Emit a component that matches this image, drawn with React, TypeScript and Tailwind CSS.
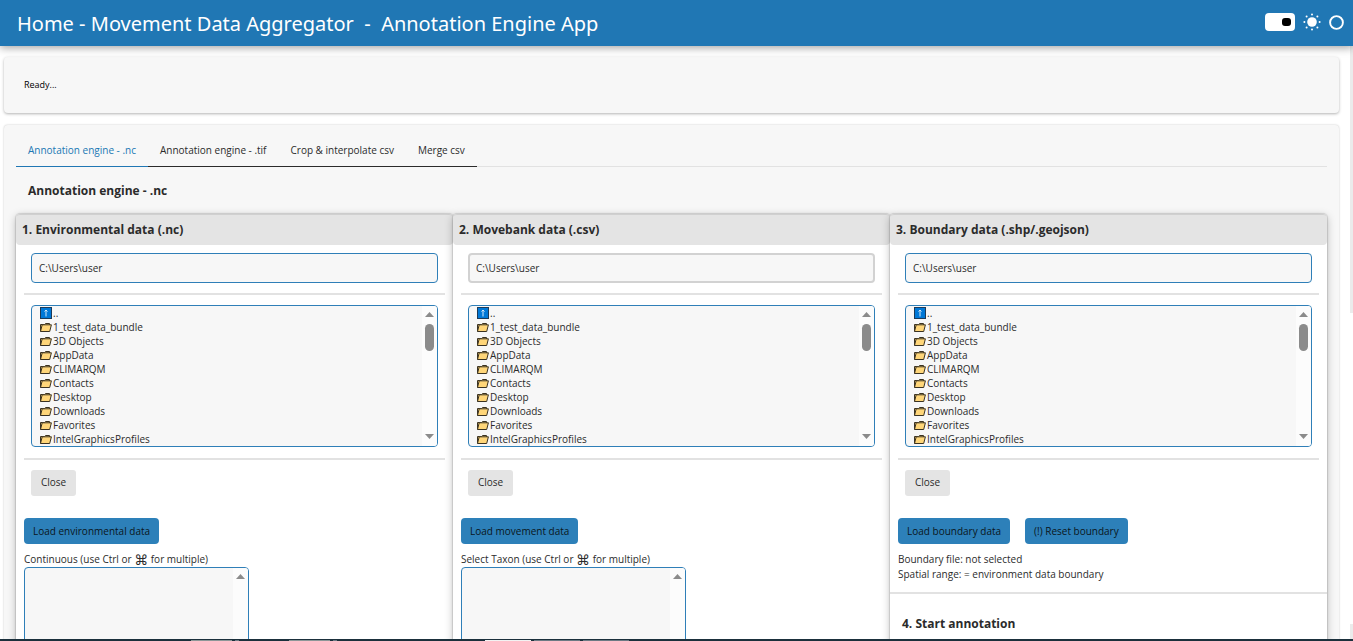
import { useState } from "react";

const folders = [
  "1_test_data_bundle",
  "3D Objects",
  "AppData",
  "CLIMARQM",
  "Contacts",
  "Desktop",
  "Downloads",
  "Favorites",
  "IntelGraphicsProfiles",
];

const tabs = [
  "Annotation engine - .nc",
  "Annotation engine - .tif",
  "Crop & interpolate csv",
  "Merge csv",
];

const FolderIcon = () => (
  <svg width="12" height="9" viewBox="0 0 12 9" className="shrink-0" aria-hidden="true">
    <path d="M0.5 8.5V1.5H4.5L5.5 0.5H9.5V2" fill="#ffd679" stroke="#3a3222" />
    <path d="M0.5 8.5L2.2 1.8H11.4L9.7 8.5Z" fill="#ffd679" stroke="#3a3222" strokeLinejoin="round" />
  </svg>
);

const UpIcon = () => (
  <svg width="12" height="12" viewBox="0 0 12 12" className="shrink-0" aria-hidden="true">
    <rect x="0.5" y="0.5" width="11" height="11" fill="#0078d7" stroke="#1c3a58" />
    <path d="M6 9.5V3M4.5 4.5L6 3L7.5 4.5" fill="none" stroke="#d4e8f8" />
  </svg>
);

const SunIcon = () => (
  <svg width="18" height="18" viewBox="0 0 18 18" fill="#fff" aria-hidden="true">
    <circle cx="9" cy="9" r="4.8" />
    <circle cx="9" cy="1.4" r="1" />
    <circle cx="9" cy="16.6" r="1" />
    <circle cx="1.4" cy="9" r="1" />
    <circle cx="16.6" cy="9" r="1" />
    <circle cx="3.6" cy="3.6" r="1" />
    <circle cx="14.4" cy="14.4" r="1" />
    <circle cx="3.6" cy="14.4" r="1" />
    <circle cx="14.4" cy="3.6" r="1" />
  </svg>
);

const ScrollBar = ({ thumb }: { thumb?: boolean }) => (
  <div className="flex w-[15px] shrink-0 flex-col items-center bg-[#fcfcfc] pt-[6px] pb-[7px]">
    <svg width="9" height="5" viewBox="0 0 9 5" aria-hidden="true">
      <path d="M0 5L4.5 0L9 5Z" fill="#8b8b8b" />
    </svg>
    {thumb && <div className="mt-[7px] h-[27px] w-[9px] rounded-full bg-[#8b8b8b]" />}
    <svg width="9" height="5" viewBox="0 0 9 5" className="mt-auto" aria-hidden="true">
      <path d="M0 0L4.5 5L9 0Z" fill="#8b8b8b" />
    </svg>
  </div>
);

const FilePicker = ({ label, muted }: { label: string; muted?: boolean }) => {
  const [path, setPath] = useState("C:\\Users\\user");
  const [selected, setSelected] = useState("");

  return (
    <div>
      <div className="px-[7px]">
        <input
          type="text"
          aria-label={`${label} path`}
          value={path}
          onChange={(e) => setPath(e.target.value)}
          className={`block h-[30px] w-full rounded bg-[#f7f7f7] outline-none ${
            muted ? "border-2 border-[#d2d2d2] px-[6px]" : "border border-[#2f7fb8] px-[7px]"
          }`}
        />
      </div>
      <hr className="my-[10px] border-t-2 border-[#e2e2e2]" />
      <div className="px-[7px]">
        <div className="flex overflow-hidden rounded border border-[#2f7fb8] bg-[#f7f7f7]">
          <ul role="listbox" aria-label={`${label} files`} className="grow pl-2">
            <li className="flex h-[14px] items-center gap-px leading-[14px]" role="option" aria-selected={false}>
              <UpIcon />
              ..
            </li>
            {folders.map((folder) => (
              <li
                key={folder}
                role="option"
                aria-selected={selected === folder}
                onClick={() => setSelected(folder)}
                className="flex h-[14px] items-center gap-px leading-[14px]"
              >
                <FolderIcon />
                {folder}
              </li>
            ))}
          </ul>
          <ScrollBar thumb />
        </div>
      </div>
      <hr className="mt-[11px] mb-[10px] border-t-2 border-[#e2e2e2]" />
      <button className="ml-[7px] block h-[26px] rounded-[3px] bg-[#e4e4e4] px-[10px] pb-0.5">Close</button>
    </div>
  );
};

const LoadButton = ({ children }: { children: string }) => (
  <button className="h-[26px] rounded bg-[#2d80b9] px-[9px] text-[#0b1620]">{children}</button>
);

const MultiSelect = ({ id, label }: { id: string; label: string }) => (
  <div>
    <label htmlFor={id} className="flex h-[15px] items-center leading-[15px] whitespace-pre">
      {label} (use Ctrl or <span className="font-['DejaVu_Sans',sans-serif] text-sm leading-none">⌘</span> for multiple)
    </label>
    <div className="flex h-[140px] w-[225px] overflow-hidden rounded border border-[#2f7fb8] bg-[#f7f7f7]">
      <select id={id} multiple className="grow bg-transparent outline-none" />
      <ScrollBar />
    </div>
  </div>
);

const Column = ({ title, children }: { title: string; children: React.ReactNode }) => (
  <section className="min-w-0 flex-1 rounded bg-white shadow-[0_0_1px_1px_rgba(0,0,0,0.12),0_2px_8px_rgba(0,0,0,0.25)]">
    <h3 className="h-[31px] rounded border-t border-[#d0d0d0] bg-[#e4e4e4] px-[6px] text-xs leading-[30px] font-bold">
      {title}
    </h3>
    <div className="px-2 pt-2">{children}</div>
  </section>
);

const App = () => {
  const [activeTab, setActiveTab] = useState(tabs[0]);
  const [dark, setDark] = useState(false);

  return (
    <div className="flex h-screen flex-col overflow-hidden bg-white font-['Open_Sans','Noto_Sans',sans-serif] text-[10px] text-[#2b2b2b]">
      <header className="z-10 flex h-[46px] shrink-0 items-center justify-between bg-[#2077b4] pr-[9px] pl-[17px] text-white shadow-[0_2px_8px_rgba(0,0,0,0.35)]">
        <h1 className="pt-0.5 font-['Noto_Sans',sans-serif] text-xl whitespace-pre">
          <a href="#home">Home - Movement Data Aggregator</a>
          {"  -  "}
          <a href="#app">Annotation Engine App</a>
        </h1>
        <div className="flex items-center gap-2 pb-0.5">
          <button
            role="switch"
            aria-checked={!dark}
            aria-label="Toggle theme"
            onClick={() => setDark(!dark)}
            className={`flex h-[18px] w-[30px] items-center rounded bg-white px-1 ${
              dark ? "justify-start" : "justify-end"
            }`}
          >
            <span className="h-2 w-[9px] rounded-[3px] bg-black" />
          </button>
          <SunIcon />
          <svg width="15" height="15" viewBox="0 0 15 15" aria-hidden="true">
            <circle cx="7.5" cy="7.5" r="6.4" fill="none" stroke="#fff" strokeWidth="1.9" />
          </svg>
        </div>
      </header>

      <div className="flex min-h-0 grow">
        <main className="flex min-w-0 grow flex-col gap-3 pt-[11px] pr-[11px] pl-1">
          <div
            role="status"
            className="flex h-14 shrink-0 items-center rounded bg-[#f7f7f7] px-5 text-[9px] text-black shadow-[0_1px_3px_rgba(0,0,0,0.3)]"
          >
            Ready...
          </div>

          <div className="grow rounded bg-[#f7f7f7] px-3 shadow-[0_0_2px_rgba(0,0,0,0.25)]">
            <div role="tablist" className="flex h-[42px] border-b border-[#e2e2e2]">
              {tabs.map((tab) => (
                <button
                  key={tab}
                  role="tab"
                  aria-selected={activeTab === tab}
                  onClick={() => setActiveTab(tab)}
                  className={`-mb-px border-b px-3 pt-[10px] ${
                    activeTab === tab ? "border-[#2077b4] text-[#2077b4]" : "border-[#2b2b2b]"
                  }`}
                >
                  {tab}
                </button>
              ))}
            </div>
            <h2 className="h-[47px] px-3 text-xs leading-[48px] font-bold">{activeTab}</h2>

            <div className="flex h-[600px]">
              <Column title="1. Environmental data (.nc)">
                <FilePicker label="Environmental data" />
                <div className="mt-[22px] mb-2">
                  <LoadButton>Load environmental data</LoadButton>
                </div>
                <MultiSelect id="continuous" label="Continuous" />
              </Column>
              <Column title="2. Movebank data (.csv)">
                <FilePicker label="Movebank data" muted />
                <div className="mt-[22px] mb-2">
                  <LoadButton>Load movement data</LoadButton>
                </div>
                <MultiSelect id="taxon" label="Select Taxon" />
              </Column>
              <Column title="3. Boundary data (.shp/.geojson)">
                <FilePicker label="Boundary data" />
                <div className="mt-[22px] mb-2 flex gap-[15px]">
                  <LoadButton>Load boundary data</LoadButton>
                  <LoadButton>(!) Reset boundary</LoadButton>
                </div>
                <p className="leading-[15px]">Boundary file: not selected</p>
                <p className="leading-[15px]">Spatial range: = environment data boundary</p>
                <hr className="-mx-2 mt-[10px] border-t-2 border-[#e2e2e2]" />
                <h3 className="mt-5 ml-1 text-xs leading-5 font-bold">4. Start annotation</h3>
              </Column>
            </div>
          </div>
        </main>
        <div className="flex w-[3px] shrink-0 flex-col justify-between">
          <div className="h-[45%] bg-[#ebebeb]" />
          <div className="h-[15px] bg-[#ebebeb]" />
        </div>
      </div>

      <footer className="z-10 flex h-[2px] shrink-0 items-end gap-[3px] bg-[#1b303c] pl-[191px]">
        <div className="h-px w-[41px] bg-[#8d9798]" />
        <div className="h-px w-1 bg-[#6d7a84]" />
        <div className="ml-[47px] h-px w-[41px] bg-[#8d9798]" />
        <div className="h-px w-1 bg-[#6d7a84]" />
        <div className="ml-[145px] h-px w-[46px] bg-[#f2f2f2]" />
        <div className="h-px w-[46px] bg-[#6d7a84]" />
        <div className="h-px w-[46px] bg-[#6d7a84]" />
      </footer>
    </div>
  );
};

export default App;
